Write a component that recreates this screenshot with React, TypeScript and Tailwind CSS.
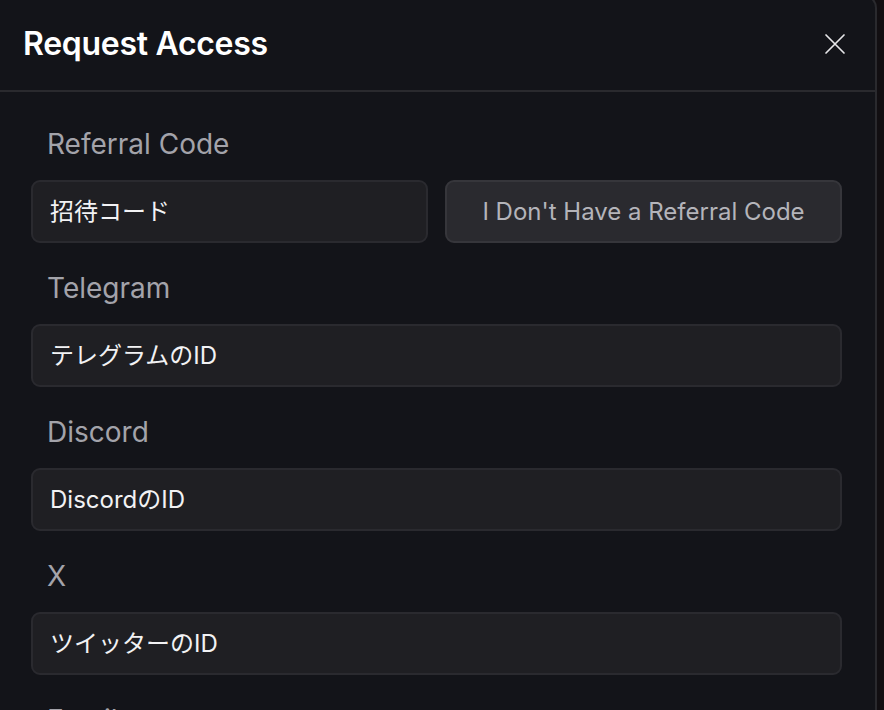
import React from "react";

const font = { fontFamily: "Inter, 'Noto Sans CJK JP', sans-serif" };

function Field({ label, placeholder }: { label: string; placeholder: string }) {
  return (
    <div className="flex flex-col">
      <div className="h-[36px] flex items-center pl-[16px] text-[28px] text-[#a3a3aa]">{label}</div>
      <div className="mt-[18px] h-[63px] rounded-[9px] border-2 border-[#2a2a2f] bg-[#1f1f23] flex items-center px-[17px] text-[24px] text-[#f2f2f4]">
        {placeholder}
      </div>
    </div>
  );
}

export default function App() {
  return (
    <div className="w-[884px] h-[710px] overflow-hidden bg-[#120f12]" style={font}>
      <div className="w-[877px] h-[730px] -mt-[6px] bg-[#131419] border-r-2 border-t-2 border-[#2a2a2e] rounded-tr-[14px] flex flex-col">
        <div className="h-[96px] shrink-0 flex items-center justify-between pl-[23px] pr-[28px] pt-[2px] border-b-2 border-[#2a2a2e]">
          <div className="text-[32px] font-semibold text-white tracking-[-0.3px]">Request Access</div>
          <svg width="24" height="24" viewBox="0 0 24 24" fill="none" stroke="#e6e6e8" strokeWidth="1.7" strokeLinecap="round">
            <path d="M3 3L21 21M21 3L3 21" />
          </svg>
        </div>
        <div className="pl-[31px] pr-[33px] pt-[34px] flex flex-col gap-[27px]">
          <div className="flex flex-col">
            <div className="h-[36px] flex items-center pl-[16px] text-[28px] text-[#a3a3aa]">Referral Code</div>
            <div className="mt-[18px] grid grid-cols-2 gap-[17px]">
              <div className="h-[63px] rounded-[9px] border-2 border-[#2a2a2f] bg-[#1f1f23] flex items-center px-[17px] text-[24px] text-[#f2f2f4]">
                招待コード
              </div>
              <div className="h-[63px] rounded-[9px] border-2 border-[#36363b] bg-[#2a2a2f] flex items-center justify-center text-[24px] text-[#b4b4ba] whitespace-nowrap">
                I Don't Have a Referral Code
              </div>
            </div>
          </div>
          <Field label="Telegram" placeholder="テレグラムのID" />
          <Field label="Discord" placeholder="DiscordのID" />
          <Field label="X" placeholder="ツイッターのID" />
          <Field label="Email" placeholder="メールアドレス" />
        </div>
      </div>
    </div>
  );
}
